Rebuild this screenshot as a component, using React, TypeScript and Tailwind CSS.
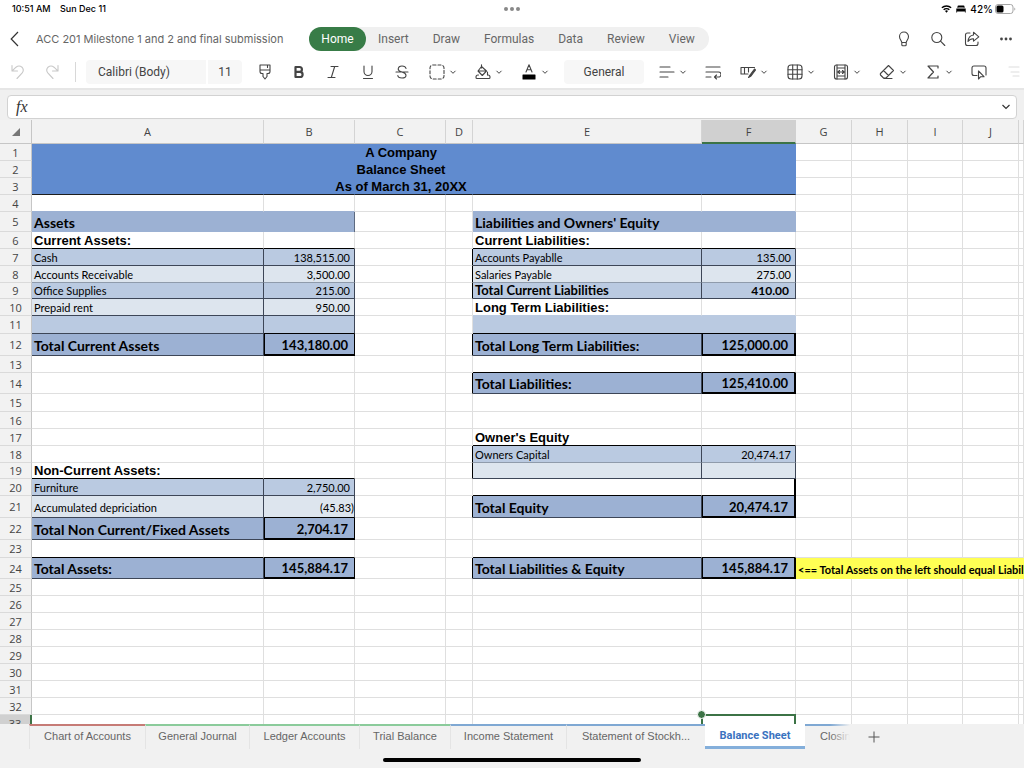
import type { ReactNode } from 'react'

const GRID = 'border-r border-b border-[#dfdfdf]'

const COLUMNS = [
  { name: 'A', width: 'w-[232px]' },
  { name: 'B', width: 'w-[91px]' },
  { name: 'C', width: 'w-[91px]' },
  { name: 'D', width: 'w-[27px]' },
  { name: 'E', width: 'w-[229px]' },
  { name: 'F', width: 'w-[94px]' },
  { name: 'G', width: 'w-[56px]' },
  { name: 'H', width: 'w-[56px]' },
  { name: 'I', width: 'w-[55px]' },
  { name: 'J', width: 'w-[56px]' },
  { name: '', width: '' },
]

type Cell = { cls: string; text?: string; span?: number }
type Row = { h: string; cells?: Record<string, Cell> }

// fills
const TITLE = 'bg-[#608bcf] border-[#608bcf] border-r border-b'
const MID = 'bg-[#9cb1d3]'
const LIGHT = 'bg-[#bacae1]'
const PALE = 'bg-[#dde5ee]'

// borders
const BOX = 'border-r border-b border-r-[#3d4657] border-b-[#3d4657]'
const BOX_SOFT = 'border-r border-b border-r-[#3d4657] border-b-[#8f9bab]'
const HEAVY = 'border-r-2 border-b-2 border-black'
const TOTAL = 'border-l border-r border-b-2 border-black'
const LINED = 'border-r border-b border-r-[#dfdfdf] border-b-black'
const LEFT_EDGE = 'border-r border-b border-r-black border-b-[#dfdfdf]'

// text
const BODY = 'font-[Lato,sans-serif] text-[11px] pl-0.5'
const NUM = 'font-[Lato,sans-serif] text-[11px] text-right pr-1'
const BOLD = 'font-[Lato,sans-serif] text-[14px] font-bold pl-0.5 pt-px'
const NUM_BOLD = 'font-[Lato,sans-serif] text-[13px] font-bold text-right pr-1.5 pt-0.5'
const ARIAL = "font-['Liberation_Sans',Arial,sans-serif] text-[13px] font-bold pl-0.5"

const edge: Cell = { cls: LEFT_EDGE }

function titleRow(text: string, bottom = ''): Record<string, Cell> {
  const blank = { cls: `${TITLE} ${bottom}` }
  return { A: blank, B: blank, C: { cls: `${TITLE} ${bottom} ${ARIAL} text-center`, text }, D: blank, E: blank, F: blank }
}

const ROWS: Row[] = [
  { h: 'h-[17px]', cells: titleRow('A Company') },
  { h: 'h-[17px]', cells: titleRow('Balance Sheet') },
  { h: 'h-[17px]', cells: titleRow('As of March 31, 20XX', 'border-b-[#1d1d1d]') },
  {
    h: 'h-[17px]',
    cells: {
      A: { cls: 'border-r border-b border-r-[#dfdfdf] border-b-[#9cb1d3]' },
      B: { cls: 'border-r border-b border-r-[#dfdfdf] border-b-[#9cb1d3]' },
      E: { cls: 'border-r border-b border-r-[#dfdfdf] border-b-[#9cb1d3]' },
      F: { cls: 'border-r border-b border-r-[#dfdfdf] border-b-[#9cb1d3]' },
    },
  },
  {
    h: 'h-[20px]',
    cells: {
      A: { cls: `${MID} ${BOLD}`, text: 'Assets' },
      B: { cls: `${MID} border-r border-[#5d6a80]` },
      E: { cls: `${MID} ${BOLD}`, text: "Liabilities and Owners' Equity" },
      F: { cls: MID },
    },
  },
  {
    h: 'h-[17px]',
    cells: {
      A: { cls: `${LINED} ${ARIAL}`, text: 'Current Assets:' },
      B: { cls: LINED },
      E: { cls: `${LINED} ${ARIAL}`, text: 'Current Liabilities:' },
      F: { cls: LINED },
    },
  },
  {
    h: 'h-[17px]',
    cells: {
      A: { cls: `${LIGHT} ${BOX} ${BODY}`, text: 'Cash' },
      B: { cls: `${LIGHT} ${BOX} ${NUM}`, text: '138,515.00' },
      D: edge,
      E: { cls: `${LIGHT} ${BOX} ${BODY}`, text: 'Accounts Payablle' },
      F: { cls: `${LIGHT} ${BOX} ${NUM}`, text: '135.00' },
    },
  },
  {
    h: 'h-[17px]',
    cells: {
      A: { cls: `${PALE} ${BOX_SOFT} ${BODY}`, text: 'Accounts Receivable' },
      B: { cls: `${PALE} ${BOX_SOFT} ${NUM}`, text: '3,500.00' },
      D: edge,
      E: { cls: `${PALE} ${BOX_SOFT} ${BODY}`, text: 'Salaries Payable' },
      F: { cls: `${PALE} ${BOX_SOFT} ${NUM}`, text: '275.00' },
    },
  },
  {
    h: 'h-[16px]',
    cells: {
      A: { cls: `${LIGHT} ${BOX} ${BODY}`, text: 'Office Supplies' },
      B: { cls: `${LIGHT} ${BOX} ${NUM}`, text: '215.00' },
      D: edge,
      E: { cls: `${LIGHT} ${BOX} font-[Lato,sans-serif] text-[13px] font-bold pl-0.5`, text: 'Total Current Liabilities' },
      F: { cls: `${LIGHT} ${BOX} font-[Lato,sans-serif] text-xs font-bold text-right pr-1.5`, text: '410.00' },
    },
  },
  {
    h: 'h-[17px]',
    cells: {
      A: { cls: `${PALE} ${BOX} ${BODY}`, text: 'Prepaid rent' },
      B: { cls: `${PALE} ${BOX} ${NUM}`, text: '950.00' },
      E: { cls: `border-r border-b border-r-[#dfdfdf] border-b-[#bacae1] ${ARIAL}`, text: 'Long Term Liabilities:' },
      F: { cls: 'border-r border-b border-r-[#dfdfdf] border-b-[#bacae1]' },
    },
  },
  {
    h: 'h-[18px]',
    cells: {
      A: { cls: `${LIGHT} ${BOX}` },
      B: { cls: `${LIGHT} border-r border-b border-r-[#3d4657] border-b-black` },
      E: { cls: `${LIGHT} border-b border-black` },
      F: { cls: `${LIGHT} border-b border-black` },
    },
  },
  {
    h: 'h-[22px]',
    cells: {
      A: { cls: `${MID} ${BOX} ${BOLD}`, text: 'Total Current Assets' },
      B: { cls: `${MID} ${TOTAL} ${NUM_BOLD}`, text: '143,180.00' },
      D: edge,
      E: { cls: `${MID} ${BOX} ${BOLD}`, text: 'Total Long Term Liabilities:' },
      F: { cls: `${MID} border-l ${HEAVY} ${NUM_BOLD}`, text: '125,000.00' },
    },
  },
  { h: 'h-[17px]', cells: { E: { cls: LINED }, F: { cls: LINED } } },
  {
    h: 'h-[21px]',
    cells: {
      D: edge,
      E: { cls: `${MID} ${BOX} ${BOLD}`, text: 'Total Liabilities:' },
      F: { cls: `${MID} border-l ${HEAVY} ${NUM_BOLD}`, text: '125,410.00' },
    },
  },
  { h: 'h-[18px]' },
  { h: 'h-[17px]' },
  {
    h: 'h-[17px]',
    cells: { E: { cls: `${LINED} ${ARIAL}`, text: "Owner's Equity" }, F: { cls: LINED } },
  },
  {
    h: 'h-[17px]',
    cells: {
      D: edge,
      E: { cls: `${LIGHT} ${BOX_SOFT} ${BODY}`, text: 'Owners Capital' },
      F: { cls: `${LIGHT} ${BOX_SOFT} ${NUM}`, text: '20,474.17' },
    },
  },
  {
    h: 'h-[16px]',
    cells: {
      A: { cls: `${LINED} ${ARIAL}`, text: 'Non-Current Assets:' },
      B: { cls: LINED },
      D: edge,
      E: { cls: `${PALE} ${BOX}` },
      F: { cls: `${PALE} ${BOX}` },
    },
  },
  {
    h: 'h-[17px]',
    cells: {
      A: { cls: `${LIGHT} ${BOX} ${BODY}`, text: 'Furniture' },
      B: { cls: `${LIGHT} ${BOX} ${NUM}`, text: '2,750.00' },
      E: { cls: LINED },
      F: { cls: 'border-r-2 border-b border-black' },
    },
  },
  {
    h: 'h-[22px]',
    cells: {
      A: { cls: `${PALE} ${BOX} ${BODY} pt-0.5`, text: 'Accumulated depriciation' },
      B: { cls: `${PALE} border-r border-b border-r-[#3d4657] border-b-black font-[Lato,sans-serif] text-[11px] text-right pt-0.5`, text: '(45.83)' },
      D: edge,
      E: { cls: `${MID} ${BOX} ${BOLD}`, text: 'Total Equity' },
      F: { cls: `${MID} border-l ${HEAVY} ${NUM_BOLD}`, text: '20,474.17' },
    },
  },
  {
    h: 'h-[22px]',
    cells: {
      A: { cls: `${MID} ${BOX} ${BOLD}`, text: 'Total Non Current/Fixed Assets' },
      B: { cls: `${MID} ${TOTAL} ${NUM_BOLD}`, text: '2,704.17' },
    },
  },
  { h: 'h-[18px]', cells: { A: { cls: LINED }, B: { cls: LINED }, E: { cls: LINED }, F: { cls: LINED } } },
  {
    h: 'h-[21px]',
    cells: {
      A: { cls: `${MID} ${BOX} ${BOLD}`, text: 'Total Assets:' },
      B: { cls: `${MID} ${TOTAL} ${NUM_BOLD}`, text: '145,884.17' },
      D: edge,
      E: { cls: `${MID} ${BOX} ${BOLD}`, text: 'Total Liabilities & Equity' },
      F: { cls: `${MID} border-l ${HEAVY} ${NUM_BOLD}`, text: '145,884.17' },
      G: {
        cls: 'bg-[#ffff54] font-[Lato,sans-serif] text-[11px] font-bold pl-0.5 pt-px',
        text: '<== Total Assets on the left should equal Liabilities',
        span: 5,
      },
    },
  },
  ...Array.from({ length: 9 }, () => ({ h: 'h-[17px]' })),
]

const SELECTED_COL = 'F'
const SELECTED_ROW = 33

function SheetRow({ row, number }: { row: Row; number: number }) {
  const selected = number === SELECTED_ROW
  const tds: ReactNode[] = []
  for (let i = 0; i < COLUMNS.length; i++) {
    const cell = row.cells?.[COLUMNS[i].name]
    tds.push(
      <td key={i} colSpan={cell?.span} className={`p-0 ${cell ? cell.cls : GRID}`}>
        {cell?.text && (
          <div className={`flex leading-[15px] whitespace-nowrap ${cell.cls.includes('text-right') ? 'justify-end' : cell.cls.includes('text-center') ? 'justify-center' : ''}`}>
            {cell.text}
          </div>
        )}
        {selected && COLUMNS[i].name === SELECTED_COL && (
          <div className="relative">
            <div className="absolute -top-[9px] -left-[1px] -right-[1px] h-8 border-2 border-[#3c7346]" />
            <div className="absolute -top-[13px] -left-[5px] size-[9px] rounded-full border border-white bg-[#3c7346]" />
          </div>
        )}
      </td>
    )
    if (cell?.span) i += cell.span - 1
  }
  return (
    <tr className={row.h}>
      <th
        scope="row"
        className={`p-0 text-[11px] leading-[15px] font-normal border-b ${
          selected ? 'bg-[#d0d0d0] border-r-2 border-[#3c7346]' : 'bg-[#f2f2f2] border-r border-r-[#c6c6c6] border-b-[#dadada]'
        }`}
      >
        {number}
      </th>
      {tds}
    </tr>
  )
}

function Sheet() {
  return (
    <main className="flex-1 min-h-0 overflow-hidden bg-white">
      <table className="w-full table-fixed border-separate border-spacing-0 text-black">
        <colgroup>
          <col className="w-8" />
          {COLUMNS.map((c, i) => <col key={i} className={c.width} />)}
        </colgroup>
        <thead className="bg-[#f2f2f2] font-['Open_Sans',sans-serif] text-[11px] text-[#444]">
          <tr className="h-6">
            <th aria-label="Select all" className="p-0 border-r border-b border-[#c6c6c6]">
              <svg viewBox="0 0 8 8" className="ml-3 size-2 fill-[#777]"><path d="M8 0V8H0Z" /></svg>
            </th>
            {COLUMNS.map((c, i) => (
              <th
                key={i}
                scope="col"
                className={`p-0 pt-0.5 font-normal border-r border-b ${
                  c.name === SELECTED_COL ? 'bg-[#d0d0d0] border-r-[#d0d0d0] border-b-2 border-b-[#3c7346]' : 'border-r-[#d4d4d4] border-b-[#c6c6c6]'
                }`}
              >
                {c.name}
              </th>
            ))}
          </tr>
        </thead>
        <tbody className="[&_th]:font-['Open_Sans',sans-serif] [&_th]:text-[#444]">
          {ROWS.map((row, i) => <SheetRow key={i} row={row} number={i + 1} />)}
        </tbody>
      </table>
    </main>
  )
}

function Icon({ children, className = 'size-4' }: { children: ReactNode; className?: string }) {
  return (
    <svg viewBox="0 0 16 16" className={`${className} shrink-0 fill-none stroke-current`} strokeWidth="1.1" strokeLinecap="round" strokeLinejoin="round">
      {children}
    </svg>
  )
}

function Tool({ label, children, menu = false, className = '' }: { label: string; children: ReactNode; menu?: boolean; className?: string }) {
  return (
    <button aria-label={label} className={`flex h-6 shrink-0 items-center ${menu ? 'w-[46px] gap-1 pl-[9px]' : 'w-[34px] justify-center'} ${className}`}>
      {children}
      {menu && (
        <svg viewBox="0 0 8 8" className="size-2 shrink-0 fill-none stroke-current">
          <path d="M1.5 2.8 4 5.3 6.500 2.800" />
        </svg>
      )}
    </button>
  )
}

function StatusBar() {
  return (
    <div className="relative flex h-[18px] items-center pl-3 pr-2 text-[9px] font-medium text-black font-[Inter,sans-serif]">
      <span className="w-12">10:51 AM</span>
      <span>Sun Dec 11</span>
      <div className="ml-auto flex items-center gap-1">
        <svg viewBox="0 0 12 9" className="h-2 w-[11px] fill-none stroke-black" strokeWidth="1.6">
          <path d="M.8 3.200a7.500 7.500 0 0 1 10.400 0M2.800 5.400a4.600 4.600 0 0 1 6.400 0" />
          <path d="M4.300 6.700a2.500 2.500 0 0 1 3.400 0L6 8.600Z" className="fill-black stroke-none" />
        </svg>
        <svg viewBox="0 0 10 8" className="h-2 w-[10px] fill-black">
          <path d="M1.500 3V1.500Q1.500.5 2.500.5H7.500Q8.500.5 8.500 1.500V3H7.800V2.500H2.200V3ZM.3 3.500H9.700V7.500H8.900V6.500H1.100V7.500H.3Z" />
        </svg>
        <span className="text-[10px]">42%</span>
        <svg viewBox="0 0 21 10" className="-ml-0.5 h-[10px] w-[21px]">
          <rect x=".5" y=".5" width="17.500" height="9" rx="2.500" className="fill-none stroke-[#a5a5a5]" />
          <rect x="1.500" y="1.500" width="7" height="7" rx="1.500" />
          <path d="M19.300 3.500v3q1-.5 1-1.500t-1-1.500" className="fill-[#a5a5a5]" />
        </svg>
      </div>
      <div className="absolute left-1/2 top-[7px] flex -translate-x-1/2 gap-0.5">
        <i className="size-1 rounded-full bg-[#888]" />
        <i className="size-1 rounded-full bg-[#888]" />
        <i className="size-1 rounded-full bg-[#888]" />
      </div>
    </div>
  )
}

const MENUS = ['Insert', 'Draw', 'Formulas', 'Data', 'Review', 'View']

function TitleBar() {
  return (
    <header className="flex h-[42px] items-center pr-px text-[#666]">
      <button aria-label="Back" className="w-9 pl-[10px] text-[#333]">
        <svg viewBox="0 0 9 16" className="h-4 w-[9px] fill-none stroke-current" strokeWidth="1.2"><path d="M8 1 1.200 8 8 15" /></svg>
      </button>
      <h1 className="w-[273px] font-[Inter,sans-serif] text-[11px] whitespace-nowrap">ACC 201 Milestone 1 and 2 and final submission</h1>
      <nav className="flex h-6 items-center rounded-full bg-[#f0f0f0] pr-0.5 text-xs">
        <button className="h-6 w-[57px] rounded-full bg-[#387c47] text-white">Home</button>
        {MENUS.map((m) => <button key={m} className="h-6 px-3">{m}</button>)}
      </nav>
      <div className="ml-auto flex text-[#444]">
        <Tool label="Tell me">
          <Icon><path d="M5.800 11.500C5.500 9.500 3.500 8.500 3.500 5.500a4.500 4.500 0 0 1 9 0c0 3-2 4-2.300 6ZM5.800 11.500v2.300q0 1 1 1h2.400q1 0 1-1v-2.300" /></Icon>
        </Tool>
        <Tool label="Search">
          <Icon><circle cx="6.800" cy="6.500" r="5" /><path d="m10.500 10.200 4.300 4.300" /></Icon>
        </Tool>
        <Tool label="Share">
          <Icon>
            <path d="M6 2H3.500Q1.500 2 1.500 4v8.500q0 2 2 2h8.500q2 0 2-2V11" />
            <path d="M9.500 1.200 14.800 5.800 9.500 10.200V7.700Q6 7.500 4 10.500 4.500 4.500 9.500 4Z" />
          </Icon>
        </Tool>
        <Tool label="More">
          <Icon><g className="fill-current stroke-none"><circle cx="3.500" cy="8" r="1.400" /><circle cx="8" cy="8" r="1.400" /><circle cx="12.500" cy="8" r="1.400" /></g></Icon>
        </Tool>
      </div>
    </header>
  )
}

function Toolbar() {
  return (
    <div className="flex h-7 items-start overflow-hidden pl-px text-[#444]">
      <Tool label="Undo" className="text-[#c8c8c8]">
        <Icon><path d="M2 1.500v5.500h5.500M2.200 6.800 6 3.200q3-2.400 6 0 2.600 3 0 6L7 14.500" /></Icon>
      </Tool>
      <Tool label="Redo" className="text-[#c8c8c8]">
        <Icon><path d="M14 1.500v5.500H8.500M13.800 6.800 10 3.200q-3-2.400-6 0-2.600 3 0 6L9 14.500" /></Icon>
      </Tool>
      <div className="mt-0.5 ml-1.5 mr-[10px] h-5 w-px shrink-0 bg-[#d8d8d8]" />
      <button className="h-6 w-[120px] shrink-0 rounded-l bg-[#f7f7f7] pl-3 text-left text-xs">Calibri (Body)</button>
      <button className="ml-0.5 mr-1.5 h-6 w-[34px] shrink-0 rounded-r bg-[#f7f7f7] text-xs">11</button>
      <Tool label="Format painter">
        <Icon><path d="M3 1h10v6.500q0 2-2 2H10v3L8 15 6 12.500v-3H5q-2 0-2-2ZM3 6h10M10.500 1v2.500" /></Icon>
      </Tool>
      <Tool label="Bold">
        <Icon><path d="M4.500 3h4a2.400 2.400 0 0 1 0 4.800H4.500ZM4.500 7.800h4.500a2.600 2.600 0 0 1 0 5.200H4.500Z" strokeWidth="2.200" /></Icon>
      </Tool>
      <Tool label="Italic"><Icon><path d="M6 2.500h7M3 13.500h7M9.700 2.500 6.300 13.500" /></Icon></Tool>
      <Tool label="Underline" className="ml-px"><Icon><path d="M4 2v5.500a4 4 0 0 0 8 0V2M3.500 14.500h9" /></Icon></Tool>
      <Tool label="Strikethrough" className="mr-px">
        <Icon><path d="M12 4.500Q11.500 2 8 2T4.200 5q0 2 3.800 3t4 3.200Q12 14 8 14T3.800 11.500M2 8h12" /></Icon>
      </Tool>
      <Tool label="Borders" menu><Icon><rect x="1" y="1" width="14" height="14" rx="3" strokeDasharray="3 2" /></Icon></Tool>
      <Tool label="Fill color" menu>
        <Icon>
          <path d="m6.500 2.500 5 4.500-4.200 4.500L3 7ZM3 7h8.500M6.500 4V.8M12.500 8v3" />
          <path d="M3.500 11H3q-2 0-2 2v.5q0 1 1 1h12q1 0 1-1V13q0-2-2-2" />
        </Icon>
      </Tool>
      <Tool label="Font color" menu>
        <Icon><path d="M5 8 8 .8 11 8M6 5.800h4" /><rect x="1.500" y="10.500" width="13" height="5" rx=".5" className="fill-black stroke-none" /></Icon>
      </Tool>
      <button className="mx-1.5 h-6 w-20 shrink-0 rounded bg-[#f7f7f7] text-xs">General</button>
      <Tool label="Alignment" menu><Icon><path d="M1 3h10M1 8h14M1 13h8" /></Icon></Tool>
      <Tool label="Wrap text">
        <Icon><path d="M1 3h14M1 8h12.500a2.500 2.500 0 0 1 0 5H10M11.500 11l-2 2 2 2M1 13h5" /></Icon>
      </Tool>
      <Tool label="Cell styles" menu className="ml-px">
        <Icon><path d="M8 10H1V3.500h13.500M4.500 3.500V10M8.500 3.500V8M1 3.500V10" /><path d="m14.500 5-4.500 6-1.500 2.500L11 12l4.500-6Z" className="fill-current" /></Icon>
      </Tool>
      <Tool label="Table" menu className="ml-px">
        <Icon><rect x="1" y="1" width="14" height="14" rx="3" /><path d="M5.700 1v14M10.300 1v14M1 5.700h14M1 10.300h14" /></Icon>
      </Tool>
      <Tool label="Merge" menu>
        <Icon><rect x="1.500" y="1" width="13" height="14" rx="2" /><path d="M4 1v14M12 1v14M4 4h8M4 12h8M5 8h6M6.500 6.500 5 8l1.500 1.500M9.500 6.500 11 8 9.500 9.500" /></Icon>
      </Tool>
      <Tool label="Clear" menu>
        <Icon><path d="M9.500 1.500 14.500 6.500 7 14H4.500L1.500 11q-.5-1 0-1.500ZM4.500 6.500l5 5M5 14.500h8" /></Icon>
      </Tool>
      <Tool label="AutoSum" menu><Icon><path d="M13 4V2H3l5.500 6L3 14h10v-2" strokeWidth="1.200" /></Icon></Tool>
      <Tool label="Select">
        <Icon><path d="M6 11.500H3q-2 0-2-2V4q0-2 2-2h10q2 0 2 2v7M7.500 7v8l2.200-2.300H13Z" /></Icon>
      </Tool>
      <Tool label="More tools" className="text-[#ddd]"><Icon><path d="M4 3h10M6 8h8M8 12h6" /></Icon></Tool>
    </div>
  )
}

function FormulaBar() {
  return (
    <div className="border-t-2 border-[#e6e6e6] bg-[#f0f0f0] px-[7px] pt-[5px] pb-px">
      <div className="flex h-6 items-center rounded border border-[#d2d2d2] bg-white pr-1.5 pl-2">
        <label htmlFor="formula" className="font-['Liberation_Serif',serif] text-base italic text-[#333]">fx</label>
        <input id="formula" className="h-5 min-w-0 flex-1 px-2 text-xs outline-none" />
        <button aria-label="Expand formula bar">
          <svg viewBox="0 0 8 8" className="size-2 fill-none stroke-[#333]" strokeWidth="1.200"><path d="M.5 2 4 5.500 7.500 2" /></svg>
        </button>
      </div>
    </div>
  )
}

const TABS = [
  { name: 'Chart of Accounts', cls: 'w-[116px] border-t-[#c67b76]' },
  { name: 'General Journal', cls: 'w-[104px] border-t-[#8bcb9b]' },
  { name: 'Ledger Accounts', cls: 'w-[110px] border-t-[#8bcb9b]' },
  { name: 'Trial Balance', cls: 'w-[91px] border-t-[#8bcb9b]' },
  { name: 'Income Statement', cls: 'w-[116px] border-t-[#7fa8d3]' },
  { name: 'Statement of Stockh...', cls: 'w-[139px] border-t-[#7fa8d3]' },
]

function SheetTabs() {
  return (
    <footer className="h-11 shrink-0 bg-[#f1f1f1] font-['Liberation_Sans',Arial,sans-serif] text-[11px] text-[#666]">
      <div className="flex h-[25px] pl-[29px]">
        {TABS.map((t) => (
          <button key={t.name} className={`h-[25px] shrink-0 border-t-2 border-l border-l-[#e4e4e4] pb-0.5 whitespace-nowrap ${t.cls}`}>{t.name}</button>
        ))}
        <button className="h-[25px] w-[100px] shrink-0 border-b-[3px] border-[#84afdb] bg-white pt-0.5 font-[Roboto,sans-serif] font-bold text-[#3a72bf]">Balance Sheet</button>
        <div className="relative w-[45px] shrink-0 overflow-hidden">
          <button className="h-[25px] border-t-2 border-[#7fa8d3] pb-0.5 pl-[15px] whitespace-nowrap">Closing</button>
          <div className="absolute inset-y-0 right-0 w-5 bg-linear-to-r from-transparent to-[#f1f1f1]" />
        </div>
        <button aria-label="Add sheet" className="ml-[18px]">
          <svg viewBox="0 0 12 12" className="size-3 stroke-[#555]"><path d="M6 .5v11M.5 6h11" /></svg>
        </button>
      </div>
      <div className="mx-auto mt-[9px] h-1 w-[258px] rounded-full bg-black" />
    </footer>
  )
}

export default function App() {
  return (
    <div className="flex h-screen flex-col overflow-hidden bg-white font-[Roboto,sans-serif]">
      <StatusBar />
      <TitleBar />
      <Toolbar />
      <FormulaBar />
      <Sheet />
      <SheetTabs />
    </div>
  )
}
